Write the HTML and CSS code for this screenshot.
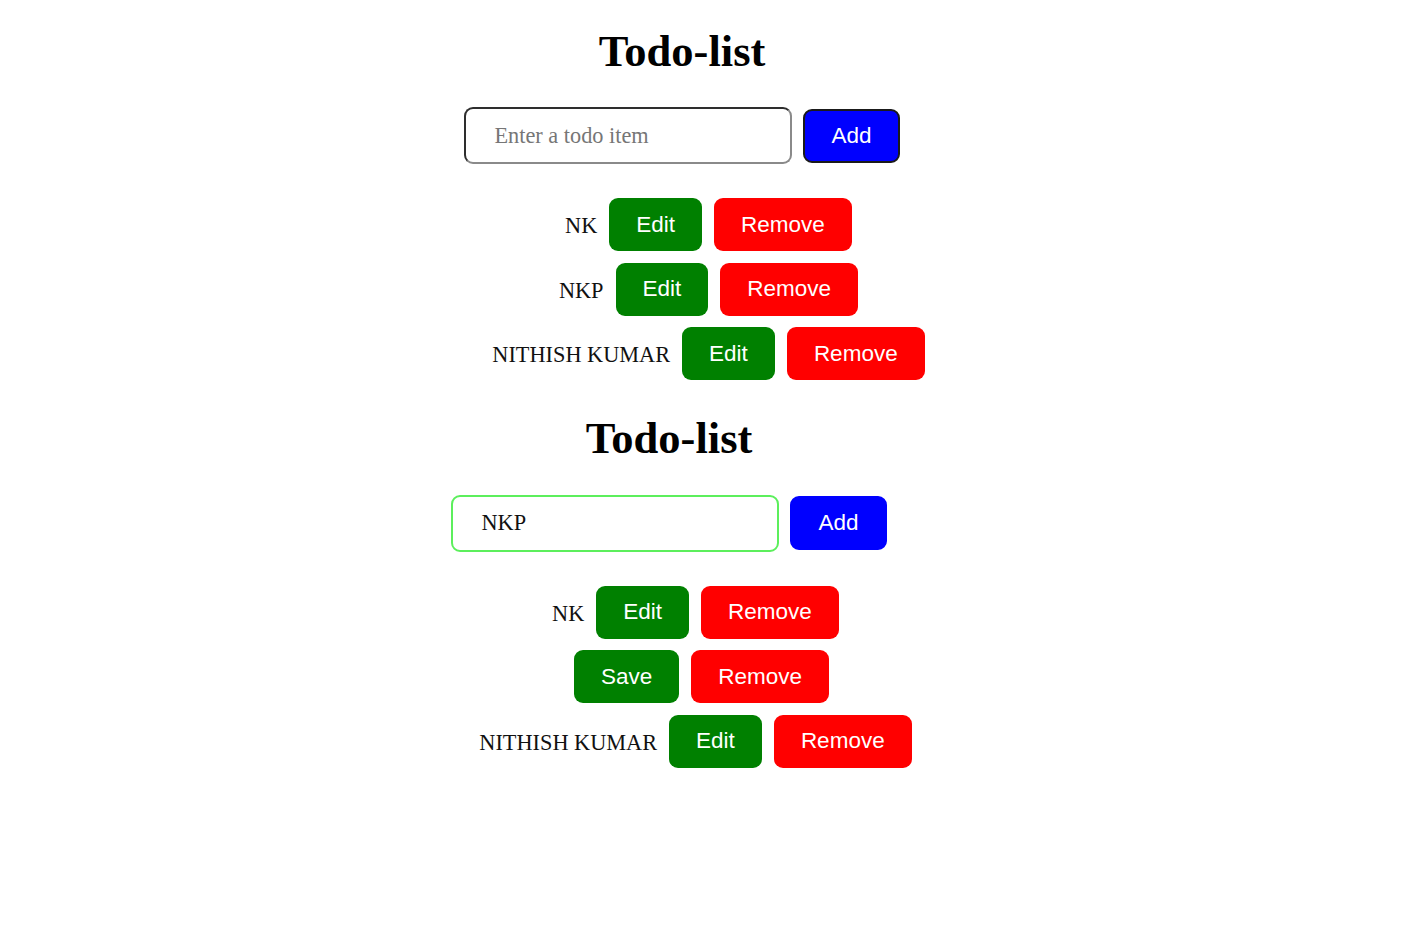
FILE: index.html
```html
<!DOCTYPE html>
<html lang="en">
<head>
<meta charset="utf-8">
<title>Todo-list</title>
<link rel="stylesheet" href="styles.css">
</head>
<body>
  <section class="app">
    <h1 class="title">Todo-list</h1>
    <div class="form">
      <input class="field" type="text" placeholder="Enter a todo item">
      <button class="btn btn-add btn-add--pressed">Add</button>
    </div>
    <ul class="list">
      <li class="item"><span class="item-text">NK</span><button class="btn btn-edit">Edit</button><button class="btn btn-remove">Remove</button></li>
      <li class="item"><span class="item-text">NKP</span><button class="btn btn-edit">Edit</button><button class="btn btn-remove">Remove</button></li>
      <li class="item"><span class="item-text">NITHISH KUMAR</span><button class="btn btn-edit">Edit</button><button class="btn btn-remove">Remove</button></li>
    </ul>
  </section>
  <section class="app app--shifted">
    <h1 class="title">Todo-list</h1>
    <div class="form">
      <input class="field field--focus" type="text" value="NKP">
      <button class="btn btn-add">Add</button>
    </div>
    <ul class="list">
      <li class="item"><span class="item-text">NK</span><button class="btn btn-edit">Edit</button><button class="btn btn-remove">Remove</button></li>
      <li class="item"><span class="item-text"></span><button class="btn btn-edit">Save</button><button class="btn btn-remove">Remove</button></li>
      <li class="item"><span class="item-text">NITHISH KUMAR</span><button class="btn btn-edit">Edit</button><button class="btn btn-remove">Remove</button></li>
    </ul>
  </section>
</body>
</html>
```

FILE: styles.css
```css
html, body {
  margin: 0;
  padding: 0;
  background: #ffffff;
}

body {
  font-family: "Liberation Serif", "Times New Roman", serif;
  font-size: 22.3px;
  color: #111;
}

.app {
  width: 1364px;
  height: 387.6px;
  padding-top: 26.5px;
  box-sizing: border-box;
  display: flex;
  flex-direction: column;
  align-items: center;
}

.app--shifted {
  width: 1338px;
}

.title {
  margin: 0;
  font-size: 44.5px;
  line-height: 48px;
  font-weight: bold;
  color: #000;
}

.form {
  margin-top: 32.5px;
  display: flex;
  align-items: center;
  gap: 11px;
}

.field {
  width: 328px;
  height: 57px;
  box-sizing: border-box;
  padding: 0 10px 0 28px;
  border: 2px solid;
  border-color: #2e2e2e #8a8a8a #8a8a8a #2e2e2e;
  border-radius: 9px;
  font-family: "Liberation Serif", "Times New Roman", serif;
  font-size: 22.3px;
  color: #111;
  background: #fff;
  outline: none;
}

.field::placeholder {
  color: #767676;
}

.field--focus {
  border-color: #5cef5c;
}

.list {
  list-style: none;
  margin: 34px 0 0 0;
  padding: 0 0 0 53px;
  display: flex;
  flex-direction: column;
  align-items: center;
  gap: 11.5px;
}

.item {
  display: flex;
  align-items: center;
  gap: 12px;
}

.item-text {
  font-size: 22.3px;
  line-height: 26px;
  padding-top: 3px;
}

.btn {
  height: 53px;
  box-sizing: border-box;
  padding: 0 27px;
  border: 0;
  border-radius: 9px;
  font-family: "Liberation Sans", Arial, sans-serif;
  font-size: 22.5px;
  line-height: 26px;
  color: #fff;
  cursor: pointer;
}

.btn-edit {
  background: #008000;
}

.btn-remove {
  background: #ff0000;
}

.btn-add {
  background: #0000ff;
  border: 2px solid #0000ff;
  padding: 0 26px;
  height: 54px;
}

.btn-add--pressed {
  border-color: #1a1a1a;
}
```
